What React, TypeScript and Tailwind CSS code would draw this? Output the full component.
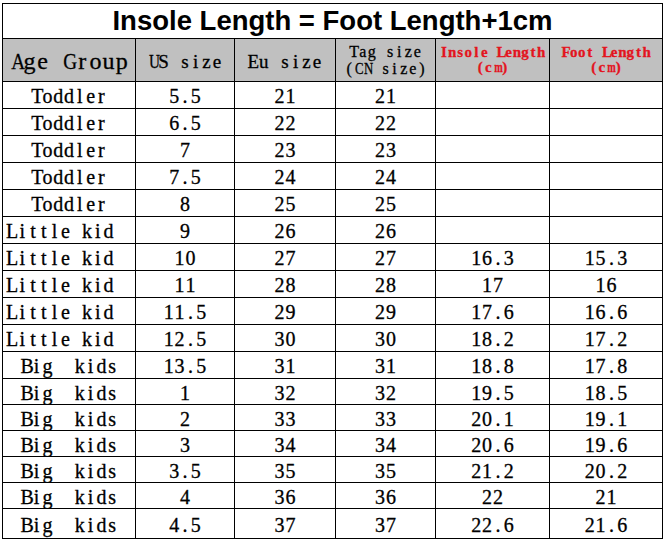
const rows: [string, string, string, string, string, string][] = [
  ['Toddler', '5.5', '21', '21', '', ''],
  ['Toddler', '6.5', '22', '22', '', ''],
  ['Toddler', '7', '23', '23', '', ''],
  ['Toddler', '7.5', '24', '24', '', ''],
  ['Toddler', '8', '25', '25', '', ''],
  ['Little kid', '9', '26', '26', '', ''],
  ['Little kid', '10', '27', '27', '16.3', '15.3'],
  ['Little kid', '11', '28', '28', '17', '16'],
  ['Little kid', '11.5', '29', '29', '17.6', '16.6'],
  ['Little kid', '12.5', '30', '30', '18.2', '17.2'],
  ['Big  kids', '13.5', '31', '31', '18.8', '17.8'],
  ['Big  kids', '1', '32', '32', '19.5', '18.5'],
  ['Big  kids', '2', '33', '33', '20.1', '19.1'],
  ['Big  kids', '3', '34', '34', '20.6', '19.6'],
  ['Big  kids', '3.5', '35', '35', '21.2', '20.2'],
  ['Big  kids', '4', '36', '36', '22', '21'],
  ['Big  kids', '4.5', '37', '37', '22.6', '21.6'],
]

// glyphs that are wider than a half-width cell get squeezed, like the sheet's CJK font
function squeeze(c: string) {
  if ('mMwW'.includes(c)) return 'scale-x-[0.68]'
  if ('GNCDOHUAQ'.includes(c)) return 'scale-x-[0.8]'
  return ''
}

function Cells({ text, cell }: { text: string; cell: string }) {
  return (
    <span className="inline-flex whitespace-pre">
      {[...text].map((c, i) => (
        <span key={i} className={`inline-block text-center ${cell} ${squeeze(c)}`}>
          {c}
        </span>
      ))}
    </span>
  )
}

const serif = "font-['Liberation_Serif','Times_New_Roman',serif]"
const head = `flex flex-col items-center justify-center bg-[#c0c0c0] ${serif}`
const stroke = '[-webkit-text-stroke:0.3px_currentColor]'

export default function App() {
  return (
    <div className="min-h-screen bg-white pt-[3px] pl-[2px]">
      <div className="grid w-fit grid-cols-[132px_98px_100px_99px_113px_112px] grid-rows-[34px_42px_repeat(11,26px)_repeat(5,25px)_29px] gap-px bg-black p-px">
        <div className="col-span-6 flex items-center justify-center bg-white font-['Liberation_Sans',Arial,sans-serif] text-[27.5px] font-bold leading-none text-black">
          Insole Length = Foot Length+1cm
        </div>

        <div className={`${head} text-[24px] leading-none pt-[2px] text-black ${stroke}`}>
          <Cells text="Age Group" cell="w-[13.2px]" />
        </div>
        <div className={`${head} text-[19px] leading-none pt-[2px] text-black ${stroke}`}>
          <Cells text="US size" cell="w-[10.7px]" />
        </div>
        <div className={`${head} text-[19px] leading-none pt-[2px] text-black ${stroke}`}>
          <Cells text="Eu size" cell="w-[10.7px]" />
        </div>
        <div className={`${head} text-[16px] leading-[17px] text-black ${stroke}`}>
          <Cells text="Tag size" cell="w-[9.1px]" />
          <Cells text="(CN size)" cell="w-[9.1px]" />
        </div>
        <div className={`${head} text-[15px] font-bold leading-[15px] text-[#e3141e] ${stroke}`}>
          <Cells text="Insole Length" cell="w-[8.1px]" />
          <Cells text="(cm)" cell="w-[8.1px]" />
        </div>
        <div className={`${head} text-[15px] font-bold leading-[15px] text-[#e3141e] ${stroke}`}>
          <Cells text="Foot Length" cell="w-[8.1px]" />
          <Cells text="(cm)" cell="w-[8.1px]" />
        </div>

        {rows.map((r, i) =>
          r.map((v, j) => (
            <div
              key={`${i}-${j}`}
              className={`flex items-center bg-white pt-[2px] ${serif} text-[20px] leading-none text-black ${stroke} ${
                j === 0 && v === 'Little kid' ? 'justify-start pl-[3px]' : 'justify-center'
              }`}
            >
              <Cells text={v} cell="w-[10.8px]" />
            </div>
          ))
        )}
      </div>
    </div>
  )
}
